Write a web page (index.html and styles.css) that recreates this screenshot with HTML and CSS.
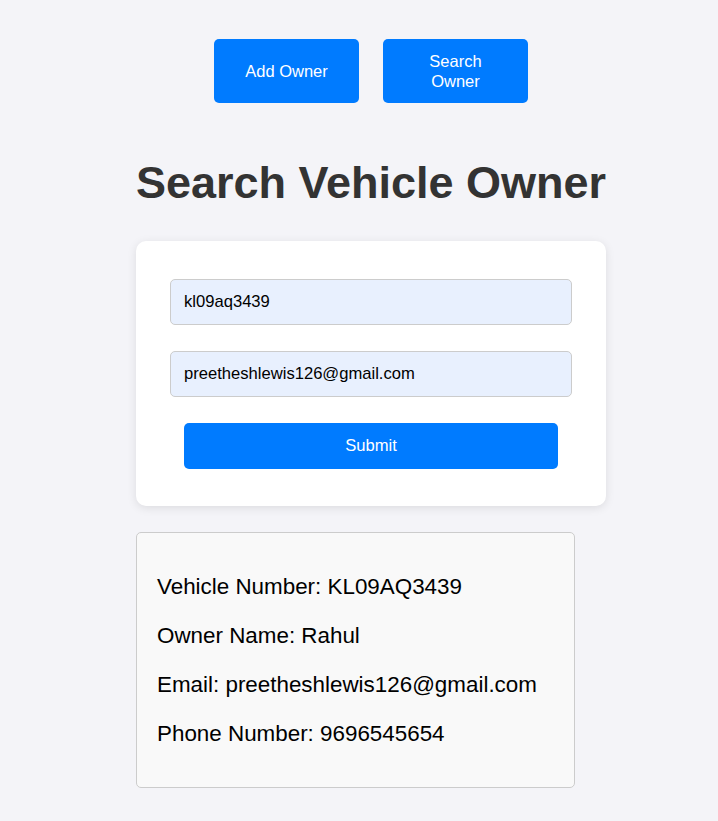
FILE: index.html
```html
<!DOCTYPE html>
<html lang="en">
<head>
<meta charset="utf-8">
<title>Search Vehicle Owner</title>
<link rel="stylesheet" href="styles.css">
</head>
<body>
<div class="page">
  <nav class="nav">
    <button class="nav-btn">Add Owner</button>
    <button class="nav-btn">Search Owner</button>
  </nav>
  <h1 class="title">Search Vehicle Owner</h1>
  <form class="card">
    <input class="field" type="text" value="kl09aq3439">
    <input class="field" type="text" value="preetheshlewis126@gmail.com">
    <button class="submit" type="button">Submit</button>
  </form>
  <div class="result">
    <p>Vehicle Number: KL09AQ3439</p>
    <p>Owner Name: Rahul</p>
    <p>Email: preetheshlewis126@gmail.com</p>
    <p>Phone Number: 9696545654</p>
  </div>
</div>
</body>
</html>
```

FILE: styles.css
```css
html, body {
  margin: 0;
  padding: 0;
  background: #f4f4f8;
  font-family: "Liberation Sans", Arial, sans-serif;
}
.page {
  width: 470px;
  margin: 0 auto;
  padding: 39px 0 30px 24px;
  display: flex;
  flex-direction: column;
  align-items: center;
}
.nav {
  display: flex;
  gap: 24px;
  align-items: stretch;
}
.nav-btn {
  width: 145px;
  height: 64px;
  padding: 12px 30px;
  border: none;
  border-radius: 5px;
  background: #007bff;
  color: #fff;
  font-family: inherit;
  font-size: 16.5px;
  line-height: 20px;
}
.title {
  margin: 54px 0 0;
  font-size: 45px;
  line-height: 52px;
  font-weight: bold;
  color: #333;
  white-space: nowrap;
}
.card {
  align-self: stretch;
  margin-top: 32px;
  background: #fff;
  border-radius: 10px;
  box-shadow: 0 2px 10px rgba(0, 0, 0, 0.1);
  padding: 38px 34px 37px;
  display: flex;
  flex-direction: column;
  align-items: center;
}
.field {
  box-sizing: border-box;
  width: 100%;
  height: 46px;
  margin: 0 0 26px;
  padding: 0 13px;
  border: 1px solid #ccc;
  border-radius: 5px;
  background: #e8f0fe;
  color: #000;
  font-family: inherit;
  font-size: 16.6px;
}
.submit {
  width: 374px;
  height: 46px;
  border: none;
  border-radius: 5px;
  background: #007bff;
  color: #fff;
  font-family: inherit;
  font-size: 16.6px;
}
.result {
  align-self: flex-start;
  box-sizing: border-box;
  width: 439px;
  margin-top: 26px;
  padding: 18px 20px;
  background: #f9f9f9;
  border: 1px solid #ccc;
  border-radius: 5px;
}
.result p {
  margin: 22px 0;
  font-size: 22.4px;
  line-height: 27px;
  color: #000;
}
```
